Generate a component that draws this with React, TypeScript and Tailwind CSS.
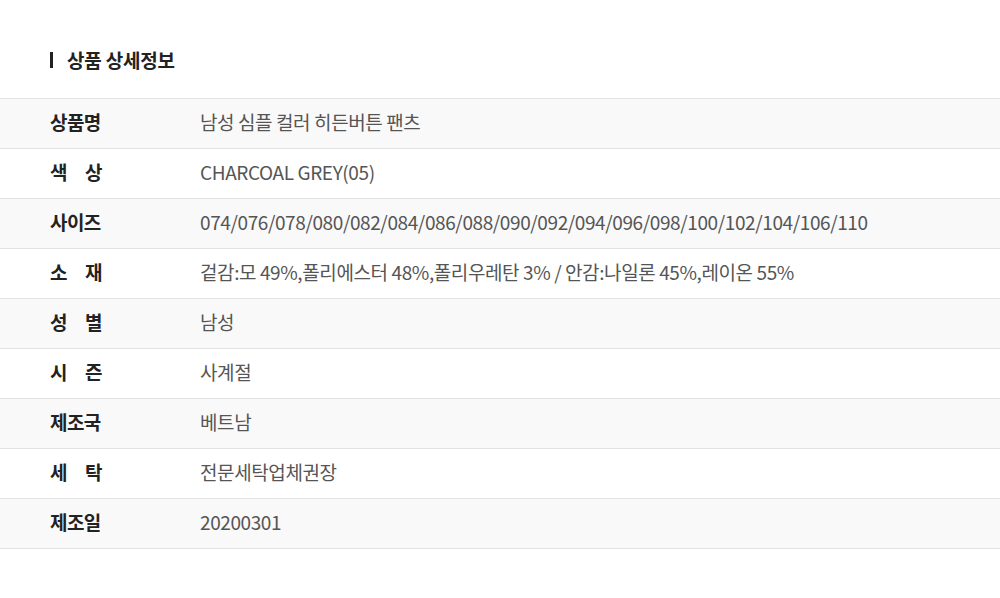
import React from "react";

type Row = { label: string[]; value: string };

const rows: Row[] = [
  { label: ["상품명"], value: "남성 심플 컬러 히든버튼 팬츠" },
  { label: ["색", "상"], value: "CHARCOAL GREY(05)" },
  { label: ["사이즈"], value: "074/076/078/080/082/084/086/088/090/092/094/096/098/100/102/104/106/110" },
  { label: ["소", "재"], value: "겉감:모 49%,폴리에스터 48%,폴리우레탄 3% / 안감:나일론 45%,레이온 55%" },
  { label: ["성", "별"], value: "남성" },
  { label: ["시", "즌"], value: "사계절" },
  { label: ["제조국"], value: "베트남" },
  { label: ["세", "탁"], value: "전문세탁업체권장" },
  { label: ["제조일"], value: "20200301" },
];

const App: React.FC = () => {
  return (
    <div
      className="w-[1000px] h-[598px] bg-white text-[#222]"
      style={{ fontFamily: '"Noto Sans CJK KR", "Noto Sans", sans-serif' }}
    >
      <div className="pt-[47px] pb-[25px] pl-[50px] flex items-center">
        <span className="w-[3px] h-[16px] bg-[#222]" />
        <h2 className="ml-[14px] text-[19px] font-bold tracking-[-0.2px] leading-[26px]">상품 상세정보</h2>
      </div>
      <div className="border-t border-[#e2e2e2]">
        {rows.map((row, i) => (
          <div
            key={i}
            className={`flex items-center h-[50px] pb-[3px] border-b border-[#e2e2e2] ${i % 2 === 0 ? "bg-[#f9f9f9]" : "bg-white"}`}
          >
            <div className="w-[200px] pl-[50px] text-[19px] font-bold tracking-[-0.6px]">
              {row.label.length === 1 ? (
                <span>{row.label[0]}</span>
              ) : (
                <span className="flex justify-between w-[52px]">
                  <span>{row.label[0]}</span>
                  <span>{row.label[1]}</span>
                </span>
              )}
            </div>
            <div className="text-[19px] text-[#555] tracking-[-0.4px]">{row.value}</div>
          </div>
        ))}
      </div>
    </div>
  );
};

export default App;
